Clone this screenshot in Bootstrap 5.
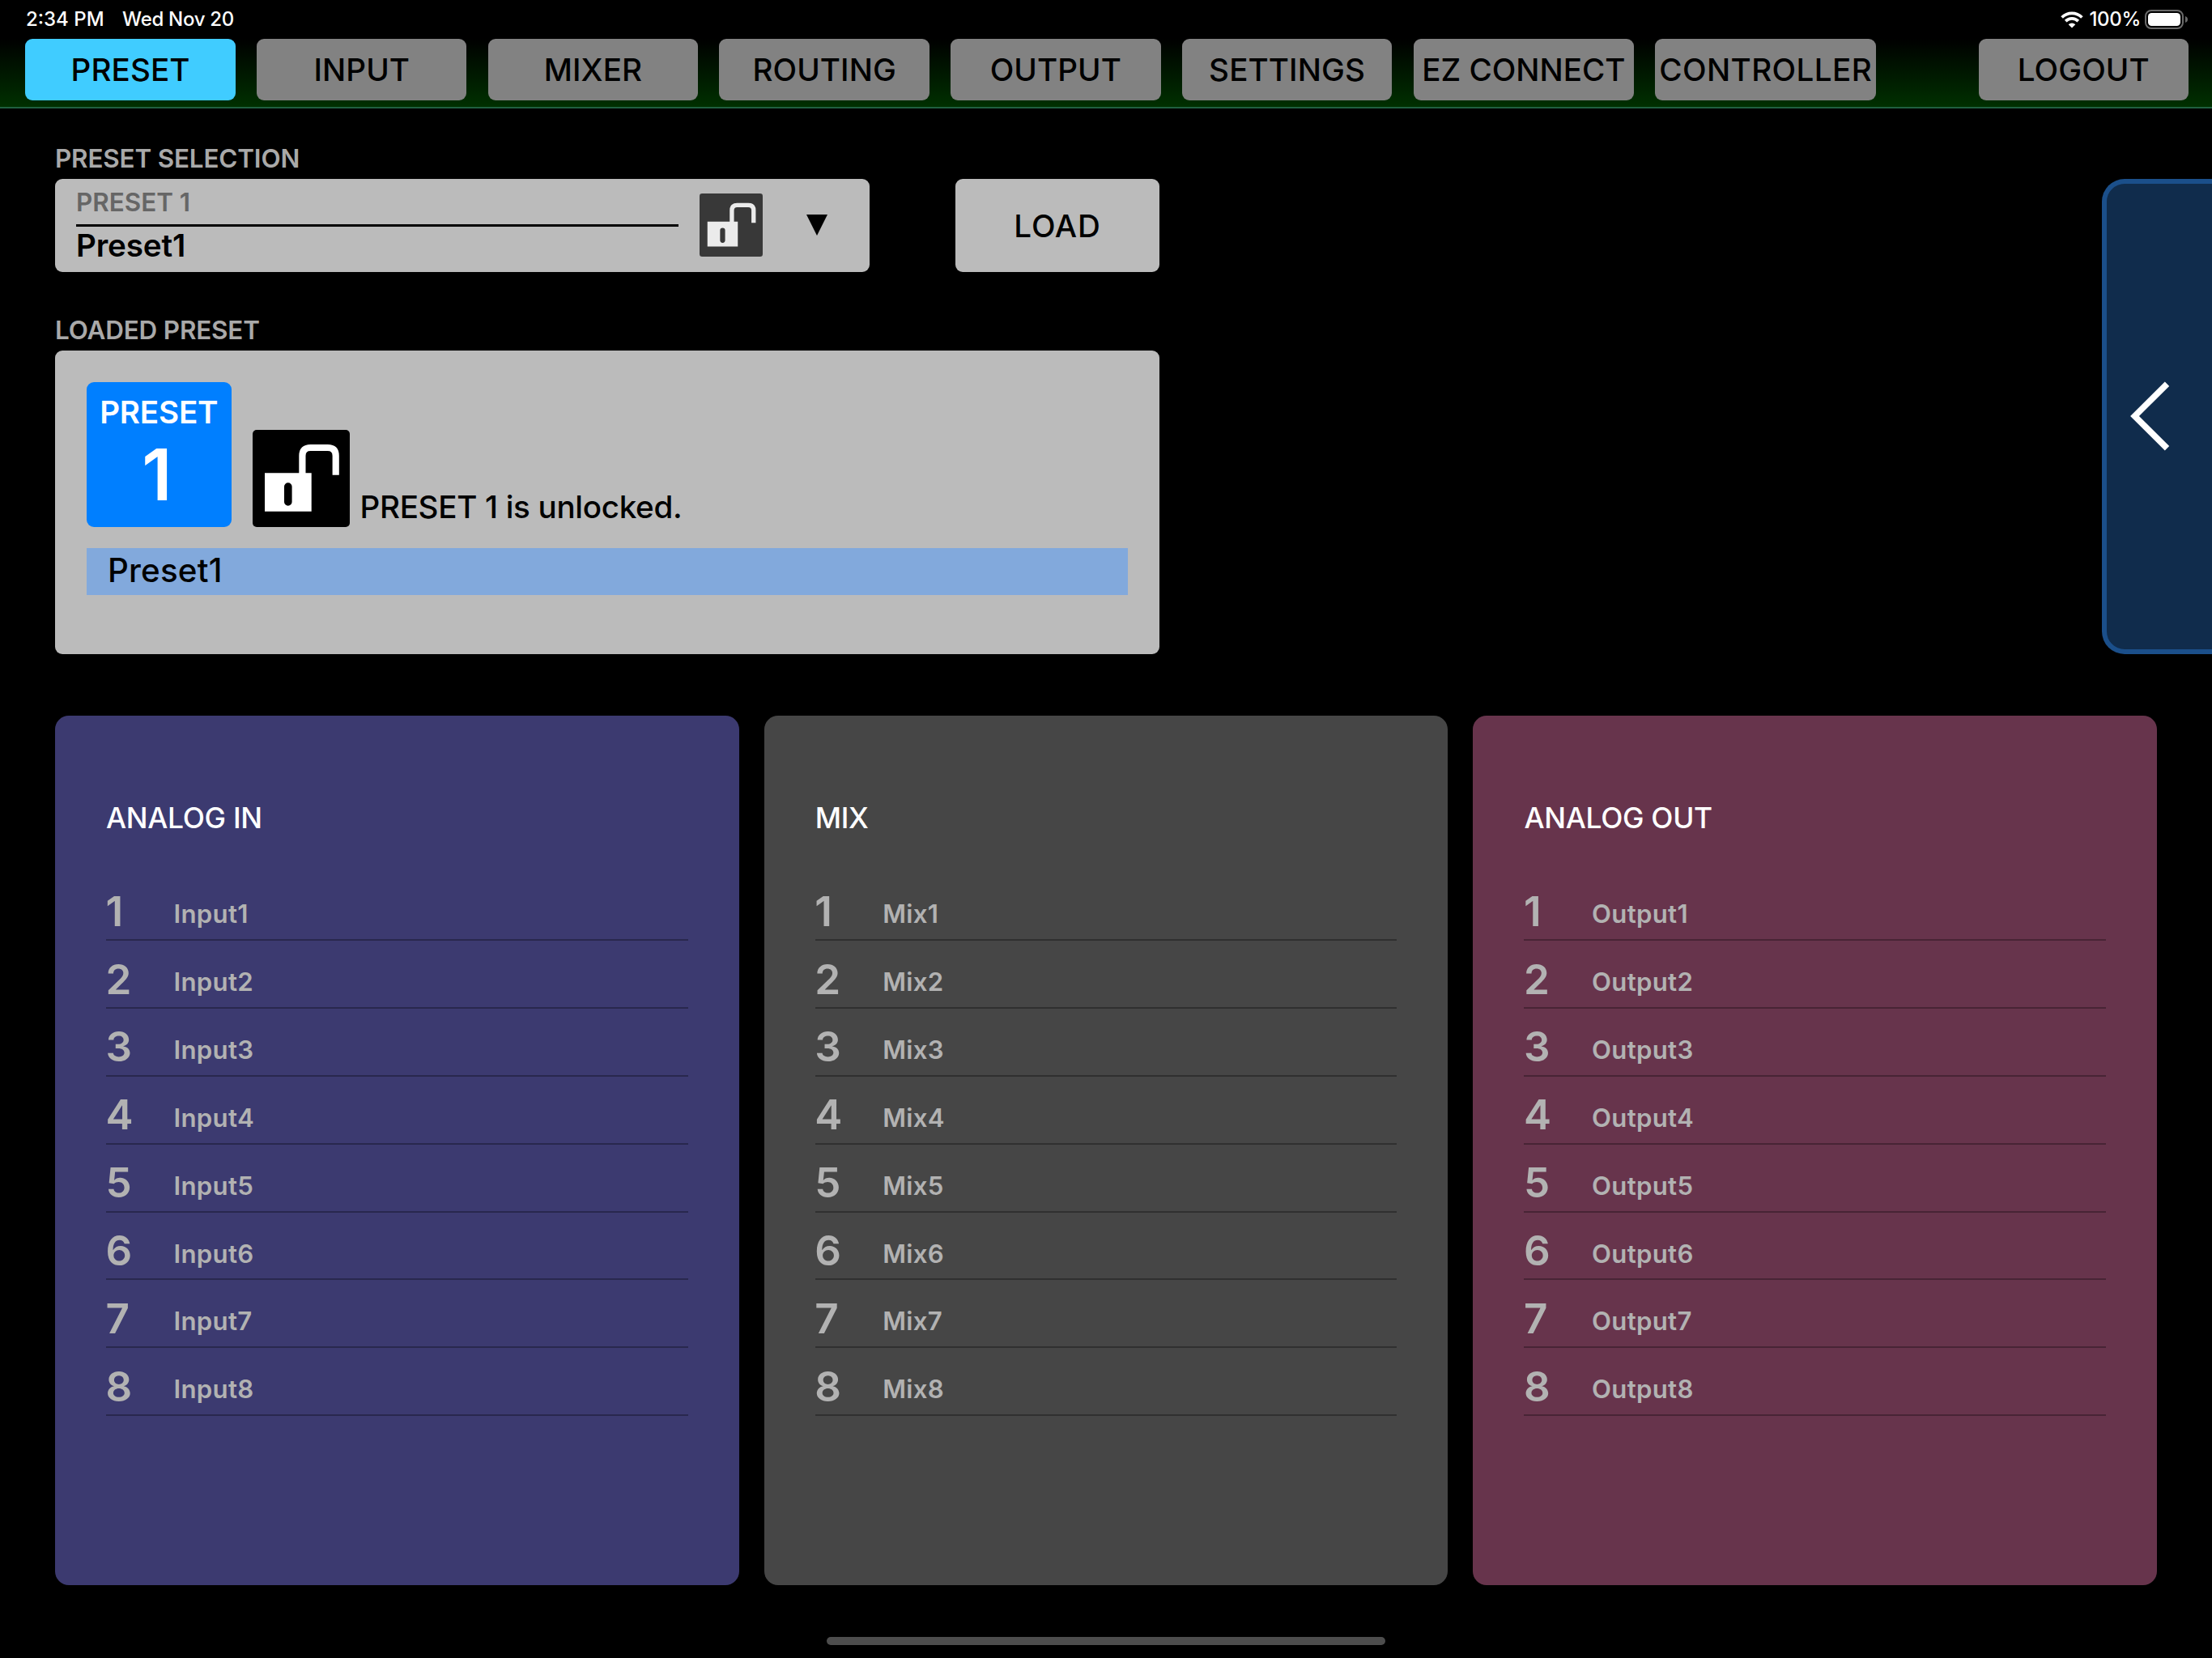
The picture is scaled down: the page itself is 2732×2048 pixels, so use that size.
<!DOCTYPE html>
<html lang="en">
<head>
<meta charset="utf-8">
<title>Preset</title>
<link rel="stylesheet" href="https://cdn.jsdelivr.net/npm/bootstrap@5.3.0/dist/css/bootstrap.min.css">
<style>
body{background:#000;color:#fff;font-family:Inter,"Liberation Sans",sans-serif;font-weight:600;width:2732px;height:2048px;overflow:hidden}
.top-area{height:134px;background:linear-gradient(#000 48px,#003000 132px);border-bottom:2px solid #206040}
.status-row{height:48px;padding:0 29px 0 32px;font-size:24px;line-height:46px;font-weight:500}
.status-date{margin-left:22.5px;letter-spacing:-.3px}
.status-pct{letter-spacing:-.3px;margin:0 5px 0 7px}
.tabs-row{height:76px;padding:0 29px 0 31.4px;gap:26.3px}
.tab-btn{width:259.4px;height:76px;padding:0;border:0;border-radius:9px;background:#828282;color:#000;font-size:38.6px;font-weight:500;line-height:76px;letter-spacing:.1px;white-space:nowrap}
.tab-btn.wide{width:272.6px;letter-spacing:0}
.tab-btn.wide.longest{letter-spacing:.4px}
.tab-btn.on{background:#40ccff}
.main-area{height:750px;padding-left:68px}
.left-area{width:1364px;padding-top:41.5px}
.sec-label{color:#a9a9a9;font-size:31.4px;line-height:40px;white-space:nowrap;letter-spacing:-.15px;margin-bottom:5px}
.panel-gray{background:#bbb;color:#000;border-radius:9px}
.select-box{width:1005.5px;height:115.5px;padding-left:26px}
.select-text{width:744px;height:100%;margin-right:26px}
.sel-id{color:#666;font-size:31.4px;line-height:58px;height:56px}
.sel-name{border-top:3px solid #000;font-size:38.6px;line-height:46px;letter-spacing:-.15px}
.sel-arrow{margin-left:54px}
.load-btn{width:252px;height:115.5px;font-size:38.6px;font-weight:500;border:0;padding:3px 0 0;letter-spacing:.8px}
.loaded-label{margin-top:52px}
.loaded{height:374.5px;padding:39px 39px 0}
.num-badge{width:178.5px;height:178.5px;border-radius:9px;background:#007fff;color:#fff;text-align:center;margin-right:26px}
.nb-t{font-size:38.6px;line-height:50px;padding-top:12px;letter-spacing:-.2px}
.nb-n{font-size:88px;line-height:104px;padding-right:5px}
.is-text{font-size:38.6px;font-weight:500;line-height:49px;margin-left:13px;letter-spacing:-.31px}
.strip{height:58px;background:#82a9dc;font-size:40.3px;font-weight:500;line-height:55px;padding-left:26px;margin-top:26.5px;letter-spacing:.2px}
.drawer-tab{width:136.5px;height:587.5px;margin-top:86.7px;padding:0 0 1px 29px;border:6px solid #1b4f8a;border-right:0;border-radius:28px 0 0 28px;background:#102c4c}
.chan-row{gap:31.2px;padding:0 68px}
.chan{width:844.6px;height:1074px;border-radius:17px;padding:0 63px}
.chan-in{background:#3c3a70}
.chan-mix{background:#464646}
.chan-out{background:#67344c}
.chan h2{font-size:35.4px;font-weight:500;line-height:44px;margin:0;padding-top:105px;height:194.3px;letter-spacing:-.3px}
.chan-item{height:83.85px;border-bottom:2px solid rgba(0,0,0,.3);color:#b2b2b2}
.chan-n{font-size:51.2px;line-height:60px;padding-top:16.5px;width:84px;margin-left:-.5px}
.chan-l{font-size:31.2px;line-height:40px;padding-top:31px;letter-spacing:.3px}
.home-bar{width:690px;height:10px;border-radius:5px;background:#4d4d4d;margin-top:64px}
</style>
<script src="https://cdn.jsdelivr.net/npm/bootstrap@5.3.0/dist/js/bootstrap.bundle.min.js"></script>
</head>
<body>
<svg class="d-none">
  <symbol id="unlock" viewBox="0 0 120 120">
    <path fill="currentColor" fill-rule="evenodd" d="M15 53.3H72.7V100.7H15ZM43.8 65.3a4.8 4.8 0 0 0-4.8 4.8v18.8a4.8 4.8 0 0 0 9.6 0v-18.8a4.8 4.8 0 0 0-4.8-4.8Z"/>
    <path fill="none" stroke="currentColor" stroke-width="8.2" d="M61.4 54V32Q61.4 22 71.4 22H92.7Q102.7 22 102.7 32V55.8"/>
  </symbol>
</svg>

<header class="top-area">
  <div class="status-row d-flex align-items-center">
    <span>2:34 PM</span><span class="status-date">Wed Nov 20</span>
    <svg class="ms-auto" width="28" height="21" viewBox="0 0 28 21">
      <g fill="none" stroke="#fff" stroke-width="3.7">
        <path d="M1.6 7.5A17.6 17.6 0 0 1 26.4 7.5"/>
        <path d="M6.2 12.1A11 11 0 0 1 21.8 12.1"/>
      </g>
      <path fill="#fff" d="M14 20.6L9.7 16.2A6.2 6.2 0 0 1 18.3 16.2Z"/>
    </svg>
    <span class="status-pct">100%</span>
    <svg width="54" height="24" viewBox="0 0 54 24">
      <rect x="1" y="1" width="46" height="22" rx="7" fill="none" stroke="#6a6a6a" stroke-width="2"/>
      <rect x="4" y="4" width="40" height="16" rx="4.5" fill="#fff"/>
      <path fill="#6a6a6a" d="M50 8q3 1.2 3 4t-3 4z"/>
    </svg>
  </div>
  <nav class="tabs-row d-flex">
    <button class="btn tab-btn on">PRESET</button>
    <button class="btn tab-btn">INPUT</button>
    <button class="btn tab-btn">MIXER</button>
    <button class="btn tab-btn">ROUTING</button>
    <button class="btn tab-btn">OUTPUT</button>
    <button class="btn tab-btn">SETTINGS</button>
    <button class="btn tab-btn wide">EZ CONNECT</button>
    <button class="btn tab-btn wide longest">CONTROLLER</button>
    <button class="btn tab-btn ms-auto">LOGOUT</button>
  </nav>
</header>

<main>
  <div class="main-area d-flex justify-content-between">
    <div class="left-area">
      <div class="sec-label">PRESET SELECTION</div>
      <div class="d-flex justify-content-between">
        <div class="panel-gray select-box d-flex align-items-center">
          <div class="select-text">
            <div class="sel-id">PRESET 1</div>
            <div class="sel-name">Preset1</div>
          </div>
          <svg width="78" height="78" viewBox="0 0 120 120" color="#ebebeb"><rect width="120" height="120" rx="5" fill="#383838"/><use href="#unlock" width="120" height="120"/></svg>
          <svg class="sel-arrow" width="26" height="26" viewBox="0 0 26 26"><path d="M0 0H26L13 26Z"/></svg>
        </div>
        <button class="btn panel-gray load-btn">LOAD</button>
      </div>

      <div class="sec-label loaded-label">LOADED PRESET</div>
      <div class="panel-gray loaded">
        <div class="d-flex align-items-end">
          <div class="num-badge">
            <div class="nb-t">PRESET</div>
            <div class="nb-n">1</div>
          </div>
          <svg width="120" height="120" color="#fff"><rect width="120" height="120" rx="5"/><use href="#unlock" width="120" height="120"/></svg>
          <div class="is-text">PRESET 1 is unlocked.</div>
        </div>
        <div class="strip">Preset1</div>
      </div>
    </div>
    <aside class="drawer-tab d-flex align-items-center">
      <svg width="52" height="88" viewBox="0 0 52 88"><path fill="none" stroke="#fff" stroke-width="7.6" d="M45.5 4.2L5.5 44L45.5 83.8"/></svg>
    </aside>
  </div>

  <div class="chan-row d-flex">
    <section class="chan chan-in" data-name="Input"><h2>ANALOG IN</h2></section>
    <section class="chan chan-mix" data-name="Mix"><h2>MIX</h2></section>
    <section class="chan chan-out" data-name="Output"><h2>ANALOG OUT</h2></section>
  </div>
  <div class="home-bar mx-auto"></div>
</main>
<script>
document.querySelectorAll('.chan').forEach(function (panel) {
  for (var i = 1; i <= 8; i++) {
    panel.insertAdjacentHTML('beforeend', '<div class="chan-item d-flex align-items-start"><span class="chan-n">' + i + '</span><span class="chan-l">' + panel.dataset.name + i + '</span></div>');
  }
});
</script>
</body>
</html>
